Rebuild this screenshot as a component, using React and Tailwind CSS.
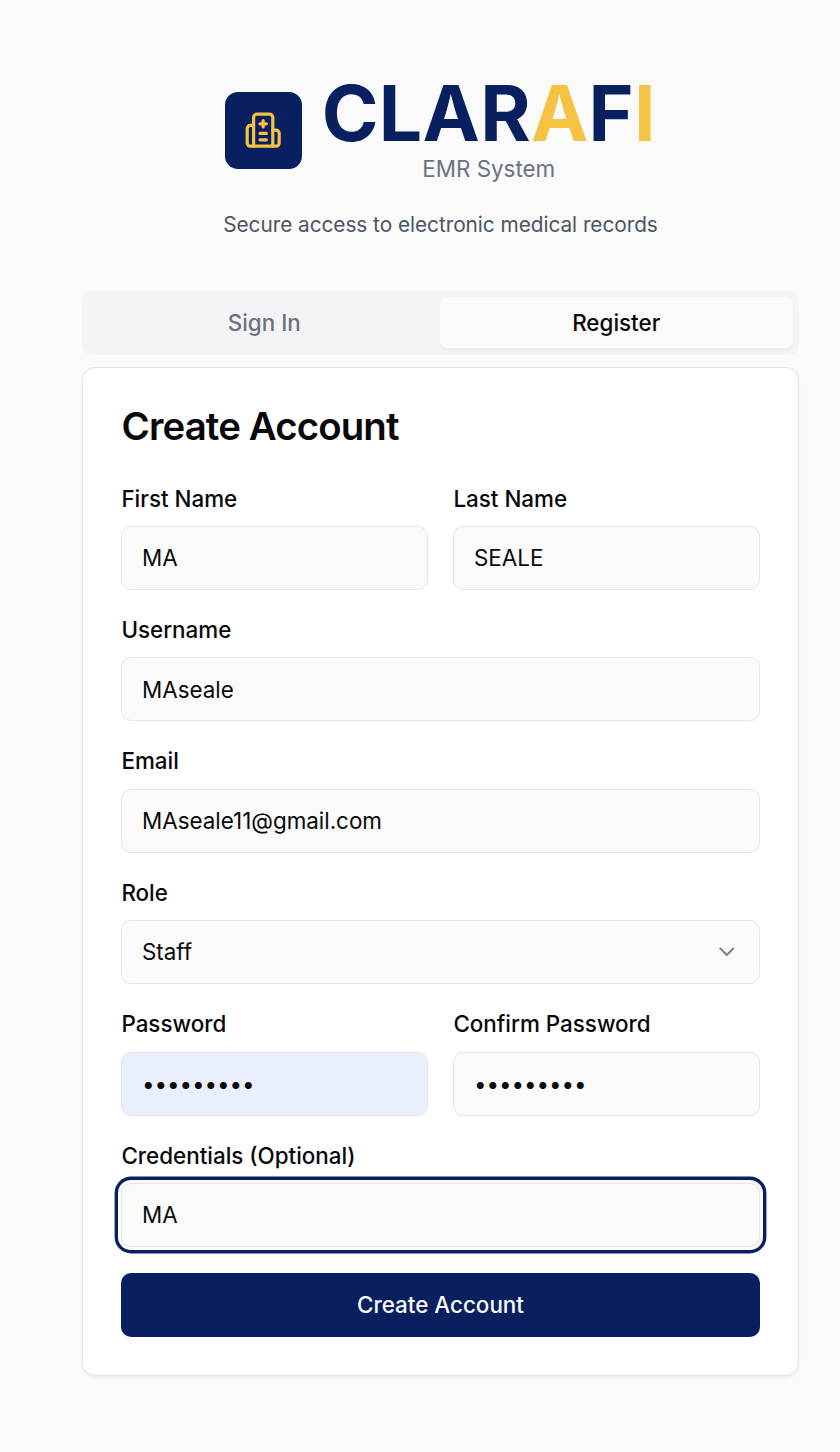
import { ChevronDown } from "lucide-react";

const field =
  "h-16 w-full min-w-0 rounded-[10px] border border-[#e5e5e7] px-5 text-[22.4px] text-[#09090b] outline-none";

function Hospital() {
  return (
    <svg
      viewBox="0 0 24 24"
      className="size-[38.4px]"
      fill="none"
      stroke="#f5c242"
      strokeWidth="2"
      strokeLinecap="round"
      strokeLinejoin="round"
    >
      <path d="M12 6v4" />
      <path d="M14 14h-4" />
      <path d="M14 18h-4" />
      <path d="M14 8h-4" />
      <path d="M18 12h2a2 2 0 0 1 2 2v6a2 2 0 0 1-2 2H4a2 2 0 0 1-2-2v-9a2 2 0 0 1 2-2h2" />
      <path d="M18 22V4a2 2 0 0 0-2-2H8a2 2 0 0 0-2 2v18" />
    </svg>
  );
}

function Field({ label, children }) {
  return (
    <div className="flex min-w-0 flex-1 flex-col">
      <label className="mb-[14.4px] h-[27px] pl-[0.4px] text-[22.4px] leading-[27px] font-medium">
        {label}
      </label>
      {children}
    </div>
  );
}

function TextInput({ value, className = "" }) {
  return <input className={`${field} bg-[#fafafa] ${className}`} defaultValue={value} />;
}

function Password({ className }) {
  return (
    <div className={`${field} flex items-center ${className}`}>
      <span className="tracking-[-0.1px]">•••••••••</span>
    </div>
  );
}

export default function App() {
  return (
    <div className="min-h-[1452px] bg-[#fafafa] pt-[75px] pl-[82px] font-[Inter,sans-serif] text-[#09090b]">
      <div className="w-[717px]">
        <header className="flex flex-col items-center">
          <div className="flex items-center gap-[19.5px]">
            <div className="mt-px flex size-[77px] items-center justify-center rounded-[13px] bg-[#082060]">
              <Hospital />
            </div>
            <div className="flex flex-col items-center">
              <h1 className="text-[76.8px] leading-[77px] font-bold tracking-[0.3px] text-[#082060]">
                CLAR<span className="text-[#f5c242]">A</span>F<span className="text-[#f5c242]">I</span>
              </h1>
              <p className="mt-px text-[22.4px] leading-8 text-[#6b7280]">EMR System</p>
            </div>
          </div>
          <p className="mt-[25px] text-[20.8px] leading-[30px] tracking-[-0.04px] text-[#4b5563]">
            Secure access to electronic medical records
          </p>
        </header>

        <div className="mt-[51px] grid h-16 grid-cols-2 rounded-[10px] bg-[#f4f4f6] px-[6px] pt-[6px] pb-[7px] text-[22.4px] font-medium">
          <button className="text-[#6b7280]">Sign In</button>
          <button className="-ml-px rounded-[7px] bg-[#fafafa] shadow-[0_1.6px_3.2px_rgba(0,0,0,0.05)]">Register</button>
        </div>

        <section className="mt-3 h-[1009px] rounded-[13px] border border-[#e5e5e7] bg-white px-[38px] pt-[35px] shadow-[0_1.6px_3.2px_rgba(0,0,0,0.05)]">
          <h2 className="pl-[0.6px] text-[38.4px] leading-[46px] font-semibold tracking-[-0.023em]">Create Account</h2>
          <form className="mt-[35.6px] flex flex-col gap-[26px]">
            <div className="grid grid-cols-2 gap-[25px]">
              <Field label="First Name"><TextInput value="MA" /></Field>
              <Field label="Last Name"><TextInput value="SEALE" /></Field>
            </div>
            <Field label="Username"><TextInput value="MAseale" /></Field>
            <Field label="Email"><TextInput value="MAseale11@gmail.com" /></Field>
            <Field label="Role">
              <div className={`${field} flex items-center justify-between bg-[#fafafa]`}>
                <span>Staff</span>
                <ChevronDown className="-mr-px size-[25.6px] text-[#848485]" />
              </div>
            </Field>
            <div className="grid grid-cols-2 gap-[25px]">
              <Field label="Password"><Password className="bg-[#e9effd]" /></Field>
              <Field label="Confirm Password"><Password className="bg-[#fafafa]" /></Field>
            </div>
            <Field label="Credentials (Optional)">
              <TextInput value="MA" className="shadow-[0_0_0_3px_#fafafa,0_0_0_6.4px_#082060]" />
            </Field>
            <button
              type="button"
              className="h-16 rounded-[10px] bg-[#082060] text-[22.4px] font-medium text-[#fafafa]"
            >
              Create Account
            </button>
          </form>
        </section>
      </div>
    </div>
  );
}
